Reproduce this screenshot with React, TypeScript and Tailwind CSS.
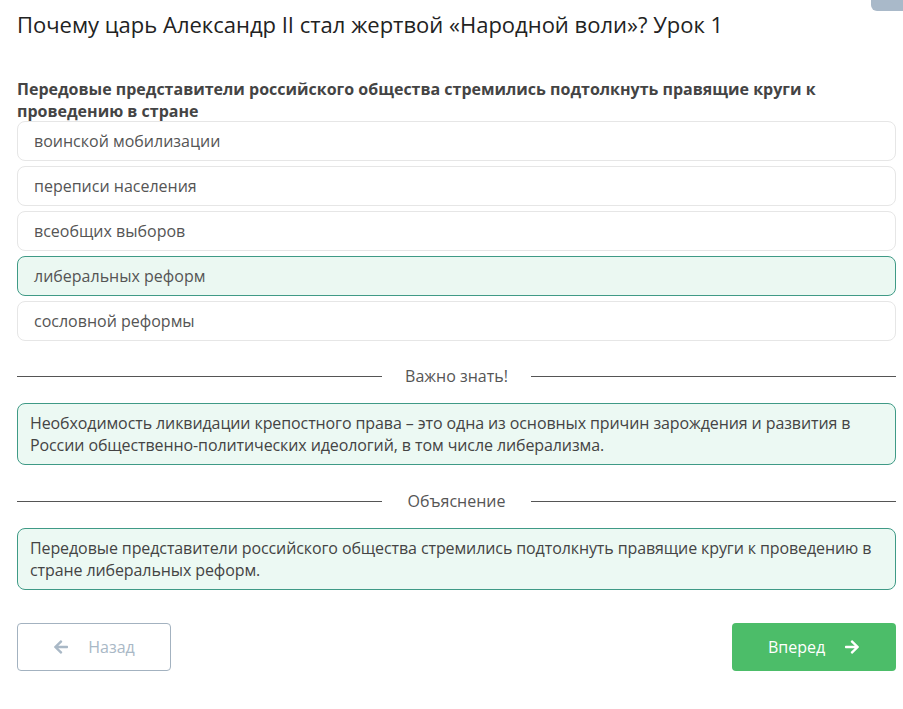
import { FaArrowLeft, FaArrowRight } from 'react-icons/fa';

const options = [
  { label: 'воинской мобилизации', selected: false },
  { label: 'переписи населения', selected: false },
  { label: 'всеобщих выборов', selected: false },
  { label: 'либеральных реформ', selected: true },
  { label: 'сословной реформы', selected: false },
];

const Divider = ({ title }: { title: string }) => (
  <div className="flex items-center">
    <div className="h-px flex-1 bg-[#555]" />
    <span className="w-[149px] text-center text-[16px] text-[#555]">{title}</span>
    <div className="h-px flex-1 bg-[#555]" />
  </div>
);

const Note = ({ children }: { children: React.ReactNode }) => (
  <div className="rounded-lg border border-[#3f9a86] bg-[#ecf9f3] px-3 py-[8px] text-[16px] leading-[22px] tracking-[-0.1px] text-[#444]">
    {children}
  </div>
);

const App = () => {
  return (
    <div className="relative min-h-[709px] bg-white pl-[17px] pr-[7px] font-['Open_Sans',sans-serif] text-[#333]">
      {/* cut-off button top right */}
      <div className="absolute right-0 top-0 h-[11px] w-[32px] rounded-bl-md bg-[#a9b9c9]" />

      <h1 className="pt-[9px] text-[22px] leading-[30px] text-[#222]">
        Почему царь Александр II стал жертвой «Народной воли»? Урок 1
      </h1>

      <p className="mt-[39px] pr-[70px] text-[16px] font-bold leading-[22px] text-[#444]">
        Передовые представители российского общества стремились подтолкнуть правящие круги к проведению в стране
      </p>

      <div className="-mt-[1px] flex flex-col gap-[5px]">
        {options.map(o => (
          <div
            key={o.label}
            className={
              o.selected
                ? 'flex h-[40px] items-center rounded-lg border border-[#3f9a86] bg-[#ebf8f2] px-4 text-[16px] text-[#555]'
                : 'flex h-[40px] items-center rounded-lg border border-[#e6e6e6] bg-white px-4 text-[16px] text-[#555]'
            }
          >
            {o.label}
          </div>
        ))}
      </div>

      <div className="mt-[23px]">
        <Divider title="Важно знать!" />
      </div>
      <div className="mt-[15px]">
        <Note>
          Необходимость ликвидации крепостного права – это одна из основных причин зарождения и развития в
          России общественно-политических идеологий, в том числе либерализма.
        </Note>
      </div>

      <div className="mt-[24px]">
        <Divider title="Объяснение" />
      </div>
      <div className="mt-[15px]">
        <Note>
          Передовые представители российского общества стремились подтолкнуть правящие круги к проведению в
          стране либеральных реформ.
        </Note>
      </div>

      <div className="mt-[33px] flex justify-between">
        <button className="flex h-[48px] w-[154px] items-center justify-center gap-[19px] rounded border border-[#a3b2c0] bg-white text-[16px] text-[#a9b8c6]">
          <FaArrowLeft className="h-[16px] w-[16px]" />
          <span>Назад</span>
        </button>
        <button className="flex h-[48px] w-[164px] items-center justify-center gap-[19px] rounded bg-[#4cbd69] text-[16px] text-white">
          <span>Вперед</span>
          <FaArrowRight className="h-[16px] w-[16px]" />
        </button>
      </div>
    </div>
  );
};

export default App;
